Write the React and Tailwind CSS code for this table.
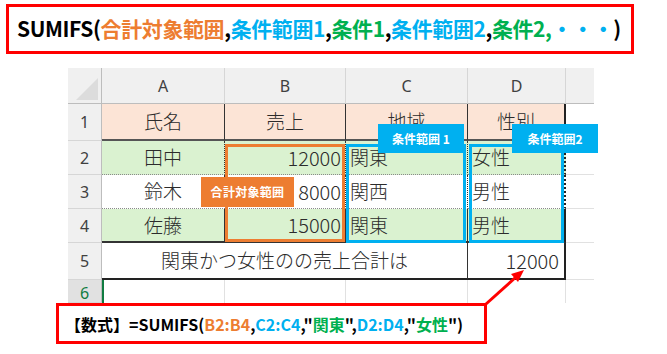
import React from "react";

const jp = { fontFamily: '"Noto Sans CJK JP", "Noto Sans", sans-serif' };

function HeadCell({ children, last }) {
  return (
    <div
      className={`flex items-center justify-center bg-[#f0f0f0] border-b border-b-[#bdbdbd] ${last ? "" : "border-r border-r-[#d6d6d6]"} text-[16px] text-[#404040]`}
      style={{ fontFamily: '"Noto Sans", sans-serif' }}
    >
      {children}
    </div>
  );
}

function RowHead({ children, h, selected }) {
  return (
    <div
      className={`flex items-center justify-center border-r border-r-[#bdbdbd] border-b border-b-[#d6d6d6] text-[16px] ${selected ? "bg-[#e1e1e1] text-[#107c41] items-start pt-[1px]" : "bg-[#f0f0f0] text-[#404040]"} ${h}`}
      style={{ fontFamily: '"Noto Sans", sans-serif' }}
    >
      {children}
    </div>
  );
}

function Cell({ children, className = "" }) {
  return (
    <div
      className={`flex items-center text-[19px] text-[#2b2b2b] font-light ${className}`}
      style={jp}
    >
      {children}
    </div>
  );
}

function ECell({ className = "" }) {
  return <div className={`bg-white border-b border-b-[#e1e1e1] ${className}`} />;
}

export default function App() {
  const O = "text-[#ed7d31]";
  const B = "text-[#00b0f0]";
  const G = "text-[#00b050]";
  return (
    <div className="relative w-[667px] h-[354px] bg-white overflow-hidden">
      <div className="pt-[4px] pl-[6px]">
        <div
          className="w-[628px] h-[50px] border-[3px] border-[#ff0000] flex items-center pl-[8px] font-bold text-[21px] text-black tracking-[-0.4px] whitespace-nowrap"
          style={jp}
        >
          <span>SUMIFS(</span>
          <span className={O}>合計対象範囲</span>
          <span>,</span>
          <span className={B}>条件範囲1</span>
          <span>,</span>
          <span className={G}>条件1</span>
          <span>,</span>
          <span className={B}>条件範囲2</span>
          <span>,</span>
          <span className={G}>条件2,</span>
          <span className={B}>・・・</span>
          <span>)</span>
        </div>
      </div>

      <div className="ml-[68px] mt-[14px] w-[526px] grid grid-cols-[34px_123px_121px_122px_98px_28px] grid-rows-[36px_37px_34px_34px_34px_37px_23px]">
        {/* header row */}
        <div className="relative bg-[#f0f0f0] border-b border-b-[#bdbdbd] border-r border-r-[#bdbdbd]">
          <div className="absolute right-[3px] bottom-[3px] w-0 h-0 border-l-[22px] border-l-transparent border-b-[22px] border-b-[#dcdcdc]" />
        </div>
        <HeadCell>A</HeadCell>
        <HeadCell>B</HeadCell>
        <HeadCell>C</HeadCell>
        <HeadCell>D</HeadCell>
        <HeadCell last> </HeadCell>

        {/* row 1 */}
        <RowHead>1</RowHead>
        <Cell className="justify-center bg-[#fce4d6] border-r border-r-[#333] border-b-2 border-b-[#555]">氏名</Cell>
        <Cell className="justify-center bg-[#fce4d6] border-r border-r-[#333] border-b-2 border-b-[#555]">売上</Cell>
        <Cell className="justify-center bg-[#fce4d6] border-r border-r-[#333] border-b-2 border-b-[#555]">地域</Cell>
        <Cell className="justify-center bg-[#fce4d6] border-r-2 border-r-[#222] border-b-2 border-b-[#555]">性別</Cell>
        <ECell />

        {/* row 2 */}
        <RowHead>2</RowHead>
        <Cell className="justify-center bg-[#daf2d0] border-r border-r-[#333] border-b border-dotted border-b-[#8a8a8a]">田中</Cell>
        <Cell className="justify-end pr-[4px] text-[20px] bg-[#daf2d0] border-r border-r-[#333] border-b border-dotted border-b-[#8a8a8a]">12000</Cell>
        <Cell className="pl-[4px] bg-[#daf2d0] border-r border-r-[#333] border-b border-dotted border-b-[#8a8a8a]">関東</Cell>
        <Cell className="pl-[4px] bg-[#daf2d0] border-r-2 border-r-[#222] border-b border-dotted border-b-[#8a8a8a]">女性</Cell>
        <ECell />

        {/* row 3 */}
        <RowHead>3</RowHead>
        <Cell className="justify-center bg-white border-r border-r-[#333] border-b border-dotted border-b-[#8a8a8a]">鈴木</Cell>
        <Cell className="justify-end pr-[4px] text-[20px] bg-white border-r border-r-[#333] border-b border-dotted border-b-[#8a8a8a]">8000</Cell>
        <Cell className="pl-[4px] bg-white border-r border-r-[#333] border-b border-dotted border-b-[#8a8a8a]">関西</Cell>
        <Cell className="pl-[4px] bg-white border-r-2 border-r-[#222] border-b border-dotted border-b-[#8a8a8a]">男性</Cell>
        <ECell />

        {/* row 4 */}
        <RowHead>4</RowHead>
        <Cell className="justify-center bg-[#daf2d0] border-r border-r-[#333] border-b-2 border-b-[#333]">佐藤</Cell>
        <Cell className="justify-end pr-[4px] text-[20px] bg-[#daf2d0] border-r border-r-[#333] border-b-2 border-b-[#333]">15000</Cell>
        <Cell className="pl-[4px] bg-[#daf2d0] border-r border-r-[#333] border-b-2 border-b-[#333]">関東</Cell>
        <Cell className="pl-[4px] bg-[#daf2d0] border-r-2 border-r-[#222] border-b-2 border-b-[#333]">男性</Cell>
        <ECell />

        {/* row 5 */}
        <RowHead>5</RowHead>
        <Cell className="col-span-3 justify-center bg-white border-r border-r-[#333] border-b-2 border-b-[#222]">関東かつ女性のの売上合計は</Cell>
        <Cell className="justify-end pr-[5px] text-[20px] bg-white border-r-2 border-r-[#222] border-b-2 border-b-[#222]">12000</Cell>
        <ECell />

        {/* row 6 */}
        <RowHead selected>6</RowHead>
        <div className="bg-white border-l-2 border-l-[#107c41] border-r border-r-[#e1e1e1]" />
        <div className="bg-white border-r border-r-[#e1e1e1]" />
        <div className="bg-white border-r border-r-[#e1e1e1]" />
        <div className="bg-white border-r border-r-[#e1e1e1]" />
        <div className="bg-white" />
      </div>

      <div
        className="ml-[56px] w-[431px] h-[41px] border-[3px] border-[#ff0000] bg-white flex items-center pl-[6px] font-bold text-[16px] text-black whitespace-nowrap"
        style={jp}
      >
        <span>【数式】=SUMIFS(</span>
        <span className={O}>B2:B4</span>
        <span>,</span>
        <span className={B}>C2:C4</span>
        <span>,"</span>
        <span className={G}>関東</span>
        <span>",</span>
        <span className={B}>D2:D4</span>
        <span>,"</span>
        <span className={G}>女性</span>
        <span>")</span>
      </div>

      {/* range boxes */}
      <div className="absolute left-[225px] top-[144px] w-[120px] h-[98px] border-[3px] border-[#ed7d31]" />
      <div className="absolute left-[346px] top-[144px] w-[120px] h-[99px] border-[3px] border-[#00b0f0]" />
      <div className="absolute left-[469px] top-[144px] w-[95px] h-[99px] border-[3px] border-[#00b0f0]" />

      {/* labels */}
      <div
        className="absolute left-[201px] top-[177px] w-[93px] h-[30px] bg-[#ed7d31] text-white font-bold text-[12px] flex items-center justify-center tracking-[0.3px]"
        style={jp}
      >
        合計対象範囲
      </div>
      <div
        className="absolute left-[378px] top-[124px] w-[86px] h-[29px] bg-[#00b0f0] text-white font-bold text-[12px] flex items-center justify-center"
        style={jp}
      >
        条件範囲 1
      </div>
      <div
        className="absolute left-[512px] top-[124px] w-[86px] h-[29px] bg-[#00b0f0] text-white font-bold text-[12px] flex items-center justify-center"
        style={jp}
      >
        条件範囲2
      </div>

      {/* arrow */}
      <svg className="absolute left-0 top-0" width="667" height="354" viewBox="0 0 667 354">
        <line x1="486" y1="304" x2="516" y2="277" stroke="#ff0000" strokeWidth="3" />
        <polygon points="524,270 511,274 518,282" fill="#ff0000" />
      </svg>
    </div>
  );
}
